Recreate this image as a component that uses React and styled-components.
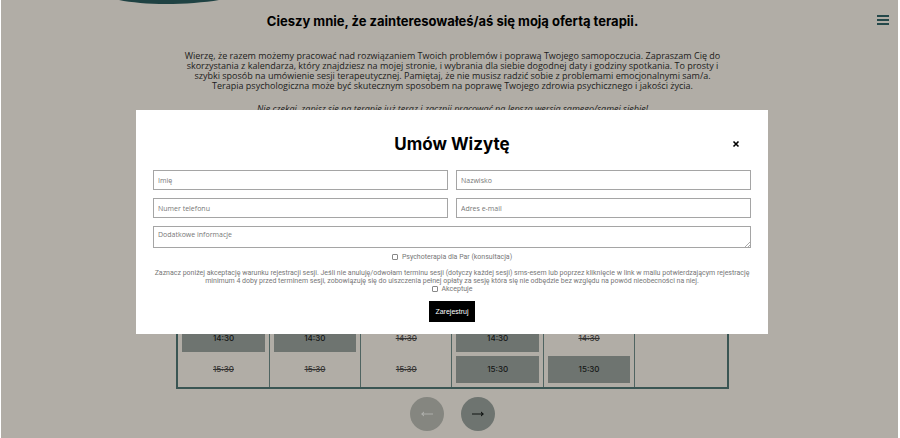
import React from "react";
import styled, { createGlobalStyle } from "styled-components";

const GlobalStyle = createGlobalStyle`
  *, *::before, *::after { box-sizing: border-box; }
  body {
    margin: 0;
    background: #fff;
    color: #1c1c1b;
    font-family: Roboto, "Open Sans", sans-serif;
  }
`;

const Page = styled.div`
  position: relative;
  min-height: 100vh;
  padding: 13px 0 7px 6px;
  margin: 0 2px 0 1px;
  background: #b1ada6;
  overflow: hidden;
`;

const Ornament = styled.svg`
  position: absolute;
  top: 0;
  left: 116px;
  width: 104px;
  height: 5px;
`;

const MenuButton = styled.button`
  position: absolute;
  top: 14px;
  right: 9px;
  width: 12px;
  height: 12px;
  padding: 0;
  border: 0;
  background: none;
  color: #24484a;
  svg { display: block; }
`;

const Intro = styled.header`
  text-align: center;
`;

const Heading = styled.h1`
  margin: 0 0 22px;
  color: #000;
  font-family: Inter, sans-serif;
  font-size: 13px;
  font-weight: 700;
  line-height: 16px;
`;

const Lead = styled.p`
  margin: 0 0 13px;
  font-family: "Open Sans", sans-serif;
  font-size: 9px;
  line-height: 10px;
  font-style: ${(p) => (p.$italic ? "italic" : "normal")};
`;

const Calendar = styled.table`
  width: 62%;
  margin: 209px auto 0;
  border: 2px solid #3a5553;
  border-top: 0;
  border-collapse: separate;
  border-spacing: 0;
  table-layout: fixed;
`;

const Day = styled.td`
  padding: 2px 4px;
  border-right: 1px solid #4f6461;
  &:last-child { border-right: 0; }
  tr:last-child > & { padding-bottom: 4px; }
`;

const Slot = styled.button`
  display: block;
  width: 100%;
  height: 27px;
  padding: 0;
  border: 0;
  font: 500 8px/27px Inter, sans-serif;
  color: ${(p) => (p.disabled ? "#353433" : "#141615")};
  background: ${(p) => (p.disabled ? "transparent" : "#6e7470")};
  text-decoration: ${(p) => (p.disabled ? "line-through" : "none")};
`;

const Pager = styled.nav`
  display: flex;
  justify-content: center;
  gap: 17px;
  margin-top: 8px;
`;

const Arrow = styled.button`
  display: grid;
  place-items: center;
  width: 34px;
  height: 34px;
  padding: 0;
  border: 0;
  border-radius: 50%;
  color: ${(p) => (p.disabled ? "#adaeaa" : "#101413")};
  background: ${(p) => (p.disabled ? "#858680" : "#6e7470")};
`;

const Overlay = styled.div`
  position: absolute;
  inset: 0;
  display: flex;
  align-items: flex-start;
  padding: 110px 130px 0 135px;
`;

const Dialog = styled.section`
  flex: 1;
  padding: 23px 13px 12px;
  background: #fff;
`;

const DialogHeader = styled.header`
  display: grid;
  grid-template-columns: 1fr auto 1fr;
  align-items: center;
  margin-bottom: 15px;
  padding: 0 14px;
`;

const Title = styled.h2`
  grid-column: 2;
  margin: 0;
  color: #000;
  font-family: Inter, sans-serif;
  font-size: 17px;
  font-weight: 700;
  line-height: 22px;
`;

const Close = styled.button`
  justify-self: end;
  display: grid;
  place-items: center;
  width: 10px;
  height: 10px;
  padding: 0;
  border: 0;
  color: #000;
  background: none;
`;

const Form = styled.form`
  color: #777;
  font-size: 7px;
  line-height: 8px;
  text-align: center;
`;

const Fields = styled.div`
  display: grid;
  grid-template-columns: 1fr 1fr;
  gap: 8px;
  padding: 0 4px;
`;

const Field = styled.input`
  width: 100%;
  height: 20px;
  padding: 0 4px;
  border: 1px solid #a5a5a5;
  border-radius: 0;
  color: #333;
  font: 7px/8px "Open Sans", sans-serif;
  &::placeholder { color: #777; }
`;

const Notes = styled.textarea`
  display: block;
  width: 100%;
  height: 22px;
  padding: 4px;
  border: 1px solid #a5a5a5;
  border-radius: 0;
  color: #333;
  font: 7px/8px "Open Sans", sans-serif;
  resize: none;
  overflow: hidden;
  &::placeholder { color: #777; }
`;

const NotesBox = styled.div`
  position: relative;
  grid-column: 1 / -1;
`;

const Grip = styled.svg`
  position: absolute;
  right: 1px;
  bottom: 1px;
  width: 5px;
  height: 5px;
`;

const Option = styled.label`
  display: flex;
  align-items: center;
  justify-content: center;
  gap: 4px;
`;

const Check = styled.input`
  appearance: none;
  width: 6px;
  height: 6px;
  margin: 0;
  border: 1px solid #888;
  border-radius: 1px;
  background: #fff;
  &:checked { background: #24484a; }
`;

const Consent = styled.div`
  margin: 5px 0 0;
`;

const Notice = styled.p`
  margin: 8px 0 0;
`;

const Submit = styled.button`
  height: 21px;
  margin-top: 8px;
  padding: 0 5px;
  border: 1px solid #000;
  color: #fff;
  background: #000;
  font: 7px/8px "Liberation Sans", sans-serif;
`;

const ROWS = [
  { time: "14:30", free: [true, true, false, true, false] },
  { time: "15:30", free: [false, false, false, true, true] },
];

function ArrowIcon({ back }) {
  return (
    <svg width="14" height="8" viewBox="0 0 14 8" aria-hidden="true">
      {back ? (
        <>
          <path d="M3 4H13" stroke="currentColor" strokeWidth="1" />
          <path d="M1 4L4 1.5V3L3 4L4 5V6.5Z" fill="currentColor" />
        </>
      ) : (
        <>
          <path d="M1 4H11" stroke="currentColor" strokeWidth="1" />
          <path d="M13 4L10 1.5V3L11 4L10 5V6.5Z" fill="currentColor" />
        </>
      )}
    </svg>
  );
}

export default function App() {
  return (
    <>
      <GlobalStyle />
      <Page>
        <Ornament viewBox="0 0 104 5" aria-hidden="true">
          <path d="M2 0H102C88 2.5 67 4 49 4C31 4 14 2.5 2 0Z" fill="#1f4243" />
        </Ornament>
        <MenuButton type="button" aria-label="Menu">
          <svg width="12" height="12" viewBox="0 0 12 12" fill="currentColor">
            <rect x="0" y="1" width="12" height="2" />
            <rect x="0" y="5" width="12" height="2" />
            <rect x="0" y="9" width="12" height="2" />
          </svg>
        </MenuButton>
        <main>
          <Intro>
            <Heading>Cieszy mnie, że zainteresowałeś/aś się moją ofertą terapii.</Heading>
            <Lead>
              Wierzę, że razem możemy pracować nad rozwiązaniem Twoich problemów i poprawą Twojego samopoczucia. Zapraszam Cię do
              <br />
              skorzystania z kalendarza, który znajdziesz na mojej stronie, i wybrania dla siebie dogodnej daty i godziny spotkania. To prosty i
              <br />
              szybki sposób na umówienie sesji terapeutycznej. Pamiętaj, że nie musisz radzić sobie z problemami emocjonalnymi sam/a.
              <br />
              Terapia psychologiczna może być skutecznym sposobem na poprawę Twojego zdrowia psychicznego i jakości życia.
            </Lead>
            <Lead $italic>Nie czekaj, zapisz się na terapię już teraz i zacznij pracować na lepszą wersją samego/samej siebie!</Lead>
          </Intro>
          <Calendar>
            <tbody>
              {ROWS.map((row) => (
                <tr key={row.time}>
                  {row.free.map((free, i) => (
                    <Day key={i}>
                      <Slot type="button" disabled={!free}>{row.time}</Slot>
                    </Day>
                  ))}
                  <Day />
                </tr>
              ))}
            </tbody>
          </Calendar>
          <Pager>
            <Arrow type="button" disabled aria-label="Poprzedni"><ArrowIcon back /></Arrow>
            <Arrow type="button" aria-label="Następny"><ArrowIcon /></Arrow>
          </Pager>
        </main>
        <Overlay>
          <Dialog role="dialog" aria-labelledby="dialog-title">
            <DialogHeader>
              <Title id="dialog-title">Umów Wizytę</Title>
              <Close type="button" aria-label="Zamknij">
                <svg width="8" height="8" viewBox="0 0 8 8">
                  <path d="M1.5 1.5L6.5 6.5M6.5 1.5L1.5 6.5" stroke="currentColor" strokeWidth="1.6" />
                </svg>
              </Close>
            </DialogHeader>
            <Form>
              <Fields>
                <Field aria-label="Imię" placeholder="Imię" />
                <Field aria-label="Nazwisko" placeholder="Nazwisko" />
                <Field type="tel" aria-label="Numer telefonu" placeholder="Numer telefonu" />
                <Field type="email" aria-label="Adres e-mail" placeholder="Adres e-mail" />
                <NotesBox>
                  <Notes aria-label="Dodatkowe informacje" placeholder="Dodatkowe informacje" />
                  <Grip viewBox="0 0 5 5" aria-hidden="true">
                    <path d="M0 5L5 0M3 5L5 3" stroke="#888" strokeWidth="0.7" />
                  </Grip>
                </NotesBox>
              </Fields>
              <Consent>
                <Option><Check type="checkbox" />Psychoterapia dla Par (konsultacja)</Option>
              </Consent>
              <Notice>
                Zaznacz poniżej akceptację warunku rejestracji sesji. Jeśli nie anuluję/odwołam terminu sesji (dotyczy każdej sesji) sms-esem lub poprzez kliknięcie w link w mailu potwierdzającym rejestrację
                {" "}
                minimum 4 doby przed terminem sesji, zobowiązuję się do uiszczenia pełnej opłaty za sesję która się nie odbędzie bez względu na powód nieobecności na niej.
              </Notice>
              <Option><Check type="checkbox" />Akceptuje</Option>
              <Submit type="button">Zarejestruj</Submit>
            </Form>
          </Dialog>
        </Overlay>
      </Page>
    </>
  );
}
